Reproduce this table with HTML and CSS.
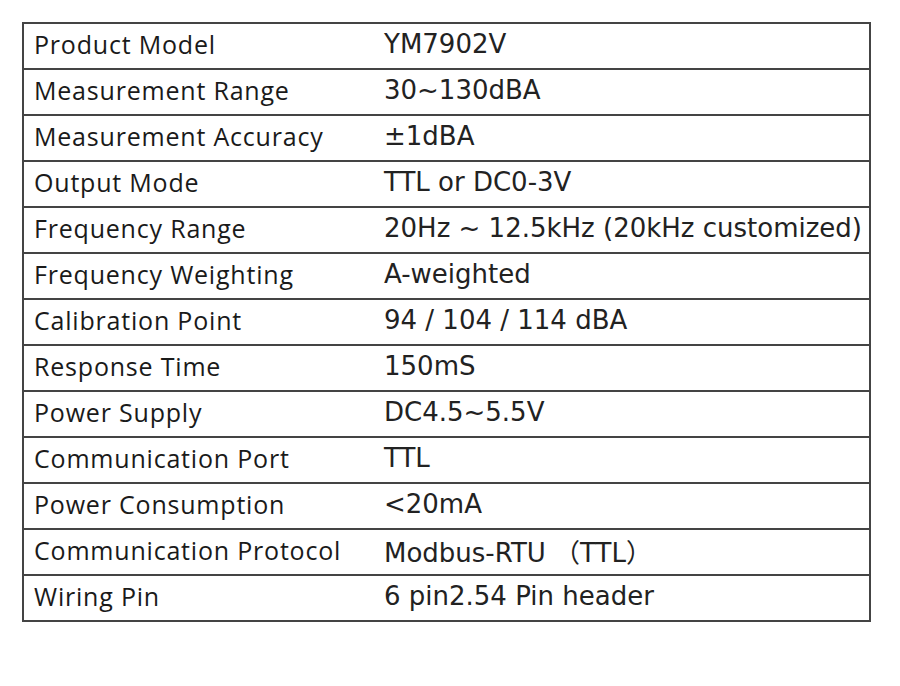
FILE: index.html
```html
<!DOCTYPE html>
<html>
<head>
<meta charset="utf-8">
<link rel="stylesheet" href="styles.css">
</head>
<body>
<table class="spec">
<tbody>
<tr><td class="k">Product Model</td><td class="v">YM7902V</td></tr>
<tr><td class="k">Measurement Range</td><td class="v">30~130dBA</td></tr>
<tr><td class="k">Measurement Accuracy</td><td class="v">±1dBA</td></tr>
<tr><td class="k">Output Mode</td><td class="v">TTL or DC0-3V</td></tr>
<tr><td class="k">Frequency Range</td><td class="v">20Hz ~ 12.5kHz (20kHz customized)</td></tr>
<tr><td class="k">Frequency Weighting</td><td class="v">A-weighted</td></tr>
<tr><td class="k">Calibration Point</td><td class="v">94 / 104 / 114 dBA</td></tr>
<tr><td class="k">Response Time</td><td class="v">150mS</td></tr>
<tr><td class="k">Power Supply</td><td class="v">DC4.5~5.5V</td></tr>
<tr><td class="k">Communication Port</td><td class="v">TTL</td></tr>
<tr><td class="k">Power Consumption</td><td class="v">&lt;20mA</td></tr>
<tr><td class="k">Communication Protocol</td><td class="v">Modbus-RTU （TTL）</td></tr>
<tr><td class="k">Wiring Pin</td><td class="v">6 pin2.54 Pin header</td></tr>
</tbody>
</table>
</body>
</html>
```
FILE: styles.css
```css
html, body {
  margin: 0;
  padding: 0;
  background: #ffffff;
}
body {
  padding: 22px 0 0 22px;
  color: #1a1a1a;
}
.spec {
  border-collapse: collapse;
  width: 849px;
  border: 2px solid #444;
}
.spec tr {
  height: 46px;
  border-top: 2px solid #444;
}
.spec td {
  padding: 0 0 4px 10px;
  vertical-align: middle;
  white-space: nowrap;
}
.k {
  width: 340px;
  padding-bottom: 7px;
  font-family: "Open Sans", "Noto Sans", sans-serif;
  font-size: 25px;
  letter-spacing: 0.8px;
}
.v {
  font-family: "DejaVu Sans", "Noto Sans CJK SC", sans-serif;
  font-size: 26px;
  color: #222;
}
```
